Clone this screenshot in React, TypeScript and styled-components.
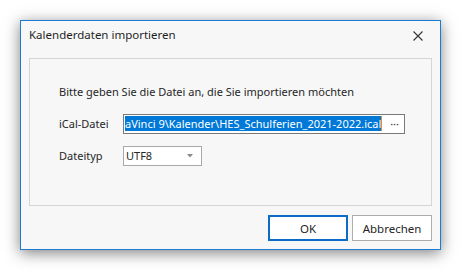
import React from "react";
import styled, { createGlobalStyle } from "styled-components";

const GlobalStyle = createGlobalStyle`
    html, body {
        margin: 0;
        padding: 0;
        background: #ffffff;
    }
    body {
        width: 461px;
        height: 270px;
        overflow: hidden;
        font-family: "Noto Sans", "Open Sans", sans-serif;
        font-size: 11px;
        color: #262626;
    }
`;

const Page = styled.div`
    padding: 20px 0 0 20px;
`;

const Window = styled.div`
    width: 421px;
    height: 230px;
    box-sizing: border-box;
    border: 1px solid #1c7ad2;
    background: #f7f7f7;
    box-shadow: 0 3px 14px rgba(0, 0, 0, 0.5);
    display: flex;
    flex-direction: column;
    padding: 0 8px 8px 8px;
`;

const TitleBar = styled.div`
    height: 37px;
    display: flex;
    align-items: flex-start;
    justify-content: space-between;
    padding-top: 6px;
    box-sizing: border-box;
`;

const Title = styled.span`
    font-size: 11.5px;
    line-height: 16px;
    color: #1f1f1f;
`;

const CloseIcon = styled.svg`
    margin-top: 4px;
    margin-right: 9px;
`;

const GroupBox = styled.div`
    height: 149px;
    box-sizing: border-box;
    border: 1px solid #d5d5d5;
    padding: 25px 0 0 29px;
    display: flex;
    flex-direction: column;
`;

const Intro = styled.div`
    line-height: 16px;
    margin-bottom: 14px;
`;

const FieldRow = styled.div`
    display: flex;
    align-items: center;
    height: 20px;
    margin-bottom: 12px;
`;

const Label = styled.div`
    width: 64px;
    line-height: 16px;
`;

const PathInput = styled.div`
    width: 282px;
    height: 20px;
    box-sizing: border-box;
    border: 1px solid #7a7a7a;
    background: #ffffff;
    display: flex;
    align-items: center;
    padding-left: 1px;
`;

const Selection = styled.span`
    height: 15px;
    line-height: 15px;
    background: #0078d7;
    color: #ffffff;
    white-space: nowrap;
    border-right: 1px solid #f08a24;
`;

const Browse = styled.span`
    margin-left: auto;
    margin-right: 5px;
    color: #333333;
    line-height: 16px;
`;

const Combo = styled.div`
    width: 79px;
    height: 20px;
    box-sizing: border-box;
    border: 1px solid #a9a9a9;
    background: #ffffff;
    display: flex;
    align-items: center;
    justify-content: space-between;
    padding: 0 8px 0 2px;
`;

const Footer = styled.div`
    display: flex;
    justify-content: flex-end;
    gap: 4px;
    margin-top: 9px;
`;

const Button = styled.button<{ $primary?: boolean }>`
    width: 80px;
    height: 26px;
    box-sizing: border-box;
    background: #ffffff;
    border: ${(p) => (p.$primary ? "2px solid #0a6cc8" : "1px solid #adadad")};
    font-family: "Noto Sans", "Open Sans", sans-serif;
    font-size: 11.5px;
    color: #262626;
    padding: 0;
`;

export default function App() {
    return (
        <>
            <GlobalStyle />
            <Page>
                <Window>
                    <TitleBar>
                        <Title>Kalenderdaten importieren</Title>
                        <CloseIcon width="10" height="10" viewBox="0 0 10 10">
                            <path d="M0.5 0.5 L9.5 9.5 M9.5 0.5 L0.5 9.5" stroke="#333" strokeWidth="1.1" fill="none" />
                        </CloseIcon>
                    </TitleBar>
                    <GroupBox>
                        <Intro>Bitte geben Sie die Datei an, die Sie importieren möchten</Intro>
                        <FieldRow>
                            <Label>iCal-Datei</Label>
                            <PathInput>
                                <Selection>aVinci 9\Kalender\HES_Schulferien_2021-2022.ical</Selection>
                                <Browse>···</Browse>
                            </PathInput>
                        </FieldRow>
                        <FieldRow>
                            <Label>Dateityp</Label>
                            <Combo>
                                <span>UTF8</span>
                                <svg width="6" height="4" viewBox="0 0 6 4">
                                    <path d="M0 0 H6 L3 3.5 Z" fill="#8a8a8a" />
                                </svg>
                            </Combo>
                        </FieldRow>
                    </GroupBox>
                    <Footer>
                        <Button $primary>OK</Button>
                        <Button>Abbrechen</Button>
                    </Footer>
                </Window>
            </Page>
        </>
    );
}
